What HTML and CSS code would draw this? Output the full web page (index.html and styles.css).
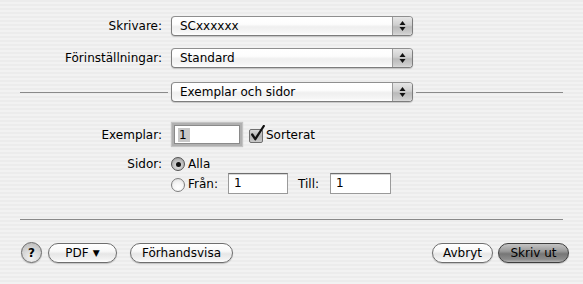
FILE: index.html
```html
<!DOCTYPE html>
<html>
<head>
<meta charset="utf-8">
<link rel="stylesheet" href="styles.css">
</head>
<body>
<div class="dialog">
  <div class="form-row first">
    <span class="label">Skrivare:</span>
    <div class="popup"><span class="popup-text">SCxxxxxx</span><span class="popup-arrows"><svg width="7" height="12" viewBox="0 0 7 12"><path d="M3.5 1 L6.5 5 L0.5 5 Z M3.5 11 L6.5 7 L0.5 7 Z" fill="#111"/></svg></span></div>
  </div>
  <div class="form-row second">
    <span class="label">Förinställningar:</span>
    <div class="popup"><span class="popup-text">Standard</span><span class="popup-arrows"><svg width="7" height="12" viewBox="0 0 7 12"><path d="M3.5 1 L6.5 5 L0.5 5 Z M3.5 11 L6.5 7 L0.5 7 Z" fill="#111"/></svg></span></div>
  </div>
  <div class="section-row">
    <span class="rule left"></span>
    <div class="popup"><span class="popup-text">Exemplar och sidor</span><span class="popup-arrows"><svg width="7" height="12" viewBox="0 0 7 12"><path d="M3.5 1 L6.5 5 L0.5 5 Z M3.5 11 L6.5 7 L0.5 7 Z" fill="#111"/></svg></span></div>
    <span class="rule right"></span>
  </div>

  <div class="copies-row">
    <span class="label">Exemplar:</span>
    <div class="content">
      <div class="textfield focused"><span class="selected">1</span></div>
      <span class="checkbox"><svg width="17" height="18" viewBox="0 0 17 18"><path d="M3.2 9.5 L6.3 14.2 L14.8 1" fill="none" stroke="#111" stroke-width="2.3" stroke-linecap="round" stroke-linejoin="round"/></svg></span>
      <span class="check-label">Sorterat</span>
    </div>
  </div>

  <div class="pages-row">
    <span class="label">Sidor:</span>
    <div class="content">
      <div class="radio-line all">
        <span class="radio on"><span class="dot"></span></span>
        <span class="radio-label">Alla</span>
      </div>
      <div class="radio-line range">
        <span class="radio"></span>
        <span class="radio-label">Från:</span>
        <div class="textfield small">1</div>
        <span class="till">Till:</span>
        <div class="textfield small">1</div>
      </div>
    </div>
  </div>

  <div class="bottom-rule"></div>

  <div class="button-bar">
    <div class="left-buttons">
      <span class="help">?</span>
      <span class="button pdf">PDF <span class="tri">▼</span></span>
      <span class="button preview">Förhandsvisa</span>
    </div>
    <div class="right-buttons">
      <span class="button cancel">Avbryt</span>
      <span class="button default">Skriv ut</span>
    </div>
  </div>
</div>
</body>
</html>
```

FILE: styles.css
```css
html, body {
  margin: 0;
  padding: 0;
}
body {
  width: 583px;
  height: 284px;
  overflow: hidden;
  font-family: "DejaVu Sans", "Verdana", sans-serif;
  font-size: 12px;
  color: #000;
  background: repeating-linear-gradient(to bottom, #ececec 0, #ececec 2px, #f2f2f2 2px, #f2f2f2 4px);
}
.dialog {
  padding-top: 16px;
}
.form-row {
  display: grid;
  grid-template-columns: 171px 242px;
  align-items: center;
  height: 20px;
}
.form-row.first { margin-bottom: 12px; }
.form-row.second { margin-bottom: 14px; }
.label {
  text-align: right;
  padding-right: 9px;
  line-height: 16px;
}
.popup {
  box-sizing: border-box;
  width: 242px;
  height: 20px;
  border: 1px solid #7d7d7d;
  border-top-color: #8f8f8f;
  border-radius: 4px;
  display: flex;
  background: linear-gradient(to bottom, #ffffff 0%, #fdfdfd 40%, #efefef 55%, #f6f6f6 85%, #ffffff 100%);
  box-shadow: 0 1px 1px rgba(0,0,0,0.18);
  overflow: hidden;
}
.popup-text {
  flex: 1;
  padding-left: 8px;
  line-height: 18px;
}
.popup-arrows {
  width: 19px;
  border-left: 1px solid #9a9a9a;
  display: flex;
  align-items: center;
  justify-content: center;
  background: linear-gradient(to bottom, #e6e6e6 0%, #cfcfcf 45%, #b9b9b9 55%, #cdcdcd 90%, #dcdcdc 100%);
}
.section-row {
  display: flex;
  align-items: center;
  height: 20px;
  padding-left: 20px;
}
.rule {
  height: 1px;
  background: #8a8a8a;
}
.rule.left { width: 148px; margin-right: 3px; }
.rule.right { width: 147px; margin-left: 3px; }

.copies-row {
  margin-top: 23px;
  display: grid;
  grid-template-columns: 171px auto;
  align-items: center;
  height: 18px;
}
.content {
  display: flex;
  align-items: center;
}
.textfield {
  box-sizing: border-box;
  background: #fff;
  border: 1px solid #9a9a9a;
  border-top-color: #6e6e6e;
  box-shadow: inset 0 1px 0 #d8d8d8;
  padding-left: 3px;
  line-height: 16px;
}
.textfield.focused {
  margin-left: 3px;
  width: 66px;
  height: 19px;
  box-shadow: 0 0 0 2px #b0b0b0, 0 0 1px 3px #c4c4c4;
  border-color: #8a8a8a;
  padding-top: 1px;
}
.selected {
  background: #c8c8c8;
  padding: 0 3px 0 1px;
}
.checkbox {
  box-sizing: border-box;
  width: 14px;
  height: 14px;
  margin-left: 9px;
  margin-top: 2px;
  border: 1px solid #6f6f6f;
  border-radius: 2px;
  background: linear-gradient(to bottom, #d8d8d8, #b4b4b4 50%, #c8c8c8);
  position: relative;
}
.checkbox svg {
  position: absolute;
  left: -1px;
  top: -5px;
}
.check-label {
  margin-left: 3px;
}

.pages-row {
  margin-top: 13px;
  display: grid;
  grid-template-columns: 171px auto;
  align-items: start;
}
.pages-row .label {
  line-height: 16px;
}
.pages-row .content {
  flex-direction: column;
  align-items: flex-start;
}
.radio-line {
  display: flex;
  align-items: center;
}
.radio-line.all { height: 16px; }
.radio-line.range { height: 21px; margin-top: 1px; }
.radio {
  box-sizing: border-box;
  width: 14px;
  height: 14px;
  border-radius: 50%;
  border: 1px solid #7e7e7e;
  background: radial-gradient(circle at 50% 70%, #ffffff 0%, #f4f4f4 50%, #d6d6d6 100%);
  display: flex;
  align-items: center;
  justify-content: center;
}
.radio.on {
  border-color: #555;
  background: radial-gradient(circle at 50% 65%, #e4e4e4 0%, #b8b8b8 60%, #8e8e8e 100%);
}
.radio-line.range .radio { margin-top: 2px; }
.dot {
  width: 5px;
  height: 5px;
  border-radius: 50%;
  background: #111;
}
.radio-label {
  margin-left: 3px;
}
.textfield.small {
  width: 60px;
  height: 21px;
  line-height: 19px;
  padding-left: 5px;
}
.radio-line.range .radio-label { width: 40px; }
.till {
  margin-left: 10px;
  width: 32px;
}
.textfield.small:last-child { width: 61px; }

.bottom-rule {
  margin: 25px 20px 0 20px;
  height: 1px;
  background: #8a8a8a;
}

.button-bar {
  margin-top: 22px;
  display: flex;
  justify-content: space-between;
  padding: 0 14px 0 21px;
}
.left-buttons, .right-buttons {
  display: flex;
  align-items: center;
}
.help {
  box-sizing: border-box;
  width: 21px;
  height: 21px;
  border-radius: 50%;
  border: 1px solid #6a6a6a;
  background: radial-gradient(circle at 50% 80%, #f2f2f2 0%, #d4d4d4 55%, #b4b4b4 100%);
  display: flex;
  align-items: center;
  justify-content: center;
  font-weight: bold;
  font-size: 12px;
  box-shadow: 0 1px 1px rgba(0,0,0,0.2);
}
.button {
  box-sizing: border-box;
  height: 20px;
  border-radius: 10px;
  border: 1px solid #6e6e6e;
  background: linear-gradient(to bottom, #ffffff 0%, #f8f8f8 40%, #e6e6e6 55%, #f2f2f2 85%, #ffffff 100%);
  box-shadow: 0 1px 1px rgba(0,0,0,0.2);
  display: flex;
  align-items: center;
  justify-content: center;
  line-height: 18px;
}
.tri {
  font-size: 9px;
  margin-left: 4px;
}
.pdf { width: 69px; margin-left: 6px; }
.preview { width: 103px; margin-left: 13px; }
.cancel { width: 61px; }
.default {
  width: 71px;
  margin-left: 5px;
  border-color: #3f3f3f;
  background: linear-gradient(to bottom, #c4c4c4 0%, #9a9a9a 40%, #767676 55%, #8c8c8c 85%, #b4b4b4 100%);
}
```
